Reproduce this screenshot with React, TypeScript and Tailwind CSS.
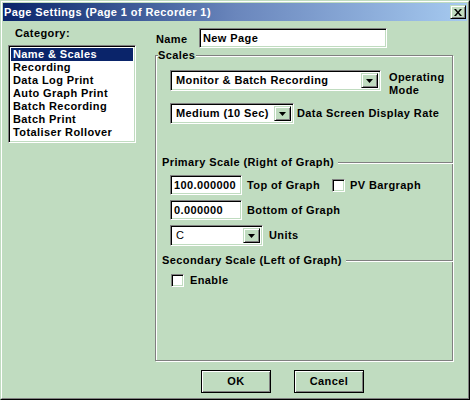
import React from "react";

const categories = [
  "Name & Scales",
  "Recording",
  "Data Log Print",
  "Auto Graph Print",
  "Batch Recording",
  "Batch Print",
  "Totaliser Rollover",
];

// classic sunken edge used by text boxes, lists and combos
const sunken =
  "border border-t-[#808080] border-l-[#808080] border-r-white border-b-white shadow-[inset_1px_1px_0_#000,inset_-1px_-1px_0_#c0dcc0]";

const raised =
  "border border-t-[#c0dcc0] border-l-[#c0dcc0] border-r-black border-b-black shadow-[inset_1px_1px_0_#fff,inset_-1px_-1px_0_#808080] bg-[#c0dcc0]";

function DropArrow() {
  return (
    <div className={`${raised} w-[17px] h-full flex items-center justify-center shrink-0`}>
      <svg width="7" height="4" viewBox="0 0 7 4">
        <path d="M0 0h7L3.5 4z" fill="#000" />
      </svg>
    </div>
  );
}

function Combo({ value, w, thin }: { value: string; w: string; thin?: boolean }) {
  return (
    <div className={`${sunken} ${w} h-[21px] bg-white flex items-stretch p-[2px] shrink-0`}>
      <div className={`flex-1 flex items-center pl-[3px] whitespace-nowrap overflow-hidden ${thin ? "font-normal" : ""}`}>
        {value}
      </div>
      <DropArrow />
    </div>
  );
}

function Field({ value, w }: { value: string; w: string }) {
  return (
    <div className={`${sunken} ${w} h-[20px] bg-white flex items-center pl-[3px] overflow-hidden whitespace-nowrap shrink-0`}>
      {value}
    </div>
  );
}

function Check() {
  return <div className={`${sunken} w-[13px] h-[13px] bg-white shrink-0`} />;
}

function Header({ text }: { text: string }) {
  return (
    <div className="flex items-center -ml-[8px] mr-[-1px]">
      <span className="whitespace-nowrap">{text}</span>
      <div className="flex-1 ml-[4px] h-[2px] border-t border-t-[#808080] border-b border-b-white" />
    </div>
  );
}

function Button({ label }: { label: string }) {
  return (
    <button className="w-[70px] h-[23px] bg-[#c0dcc0] border border-black shadow-[inset_1px_1px_0_#fff,inset_-1px_-1px_0_#808080] flex items-center justify-center font-bold">
      {label}
    </button>
  );
}

export default function App() {
  return (
    <div className="w-[470px] h-[400px] bg-[#c0dcc0] font-['Liberation_Sans',Arial,sans-serif] text-[11px] font-bold leading-[13px] tracking-[0.4px] text-black border border-t-[#c0dcc0] border-l-[#c0dcc0] border-r-black border-b-black select-none">
      <div className="h-full border border-t-white border-l-white border-r-[#808080] border-b-[#808080] p-px flex flex-col">
        {/* title bar */}
        <div className="h-[18px] bg-linear-to-r from-[#0a246a] via-[#6a86bc] to-[#a6caf0] flex items-center justify-between pl-[1px] pr-[1px] text-white">
          <span>Page Settings (Page 1 of Recorder 1)</span>
          <div className={`${raised} w-[16px] h-[14px] flex items-center justify-center`}>
            <svg width="8" height="7" viewBox="0 0 8 7">
              <path d="M0 0h2l2 2.5L6 0h2L5 3.5 8 7H6L4 4.5 2 7H0l3-3.5z" fill="#000" />
            </svg>
          </div>
        </div>

        <div className="flex flex-1">
          {/* category list */}
          <div className="ml-[5px] w-[128px] flex flex-col">
            <div className="pt-[6px] pl-[7px]">Category:</div>
            <div className={`${sunken} mt-[5px] h-[98px] bg-white p-[2px]`}>
              {categories.map((c, i) => (
                <div
                  key={c}
                  className={`h-[13px] pl-[2px] whitespace-nowrap ${i === 0 ? "bg-[#0a246a] text-white" : ""}`}
                >
                  {c}
                </div>
              ))}
            </div>
          </div>

          {/* settings */}
          <div className="ml-[19px] w-[298px] flex flex-col">
            <div className="mt-[7px] flex items-center">
              <span className="w-[44px] pl-[1px] pt-[3px]">Name</span>
              <Field value="New Page" w="w-[188px]" />
            </div>

            <div className="relative mt-[7px] h-[306px] border border-[#808080] shadow-[inset_1px_1px_0_#fff,1px_1px_0_#fff] pl-[14px] pt-[14px]">
              <span className="absolute -top-[7px] left-[2px] bg-[#c0dcc0] pr-[1px]">Scales</span>

              <div className="flex items-start">
                <Combo value="Monitor & Batch Recording" w="w-[211px]" />
                <div className="ml-[8px] mt-[1px]">
                  Operating
                  <br />
                  Mode
                </div>
              </div>

              <div className="mt-[6px] flex items-center">
                <Combo value="Medium (10 Sec)" w="w-[124px]" />
                <span className="ml-[3px] whitespace-nowrap">Data Screen Display Rate</span>
              </div>

              <div className="mt-[32px]">
                <Header text="Primary Scale (Right of Graph)" />
              </div>

              <div className="mt-[6px] flex items-center">
                <Field value="100.000000" w="w-[72px]" />
                <span className="ml-[5px] w-[85px] whitespace-nowrap">Top of Graph</span>
                <Check />
                <span className="ml-[5px]">PV Bargraph</span>
              </div>

              <div className="mt-[5px] flex items-center">
                <Field value="0.000000" w="w-[72px]" />
                <span className="ml-[5px]">Bottom of Graph</span>
              </div>

              <div className="mt-[5px] flex items-center">
                <Combo value="C" w="w-[93px]" thin />
                <span className="ml-[6px]">Units</span>
              </div>

              <div className="mt-[8px]">
                <Header text="Secondary Scale (Left of Graph)" />
              </div>

              <div className="mt-[7px] ml-[1px] flex items-center">
                <Check />
                <span className="ml-[6px]">Enable</span>
              </div>
            </div>

            <div className="mt-[9px] ml-[46px] flex gap-[23px]">
              <Button label="OK" />
              <Button label="Cancel" />
            </div>
          </div>
        </div>
      </div>
    </div>
  );
}
